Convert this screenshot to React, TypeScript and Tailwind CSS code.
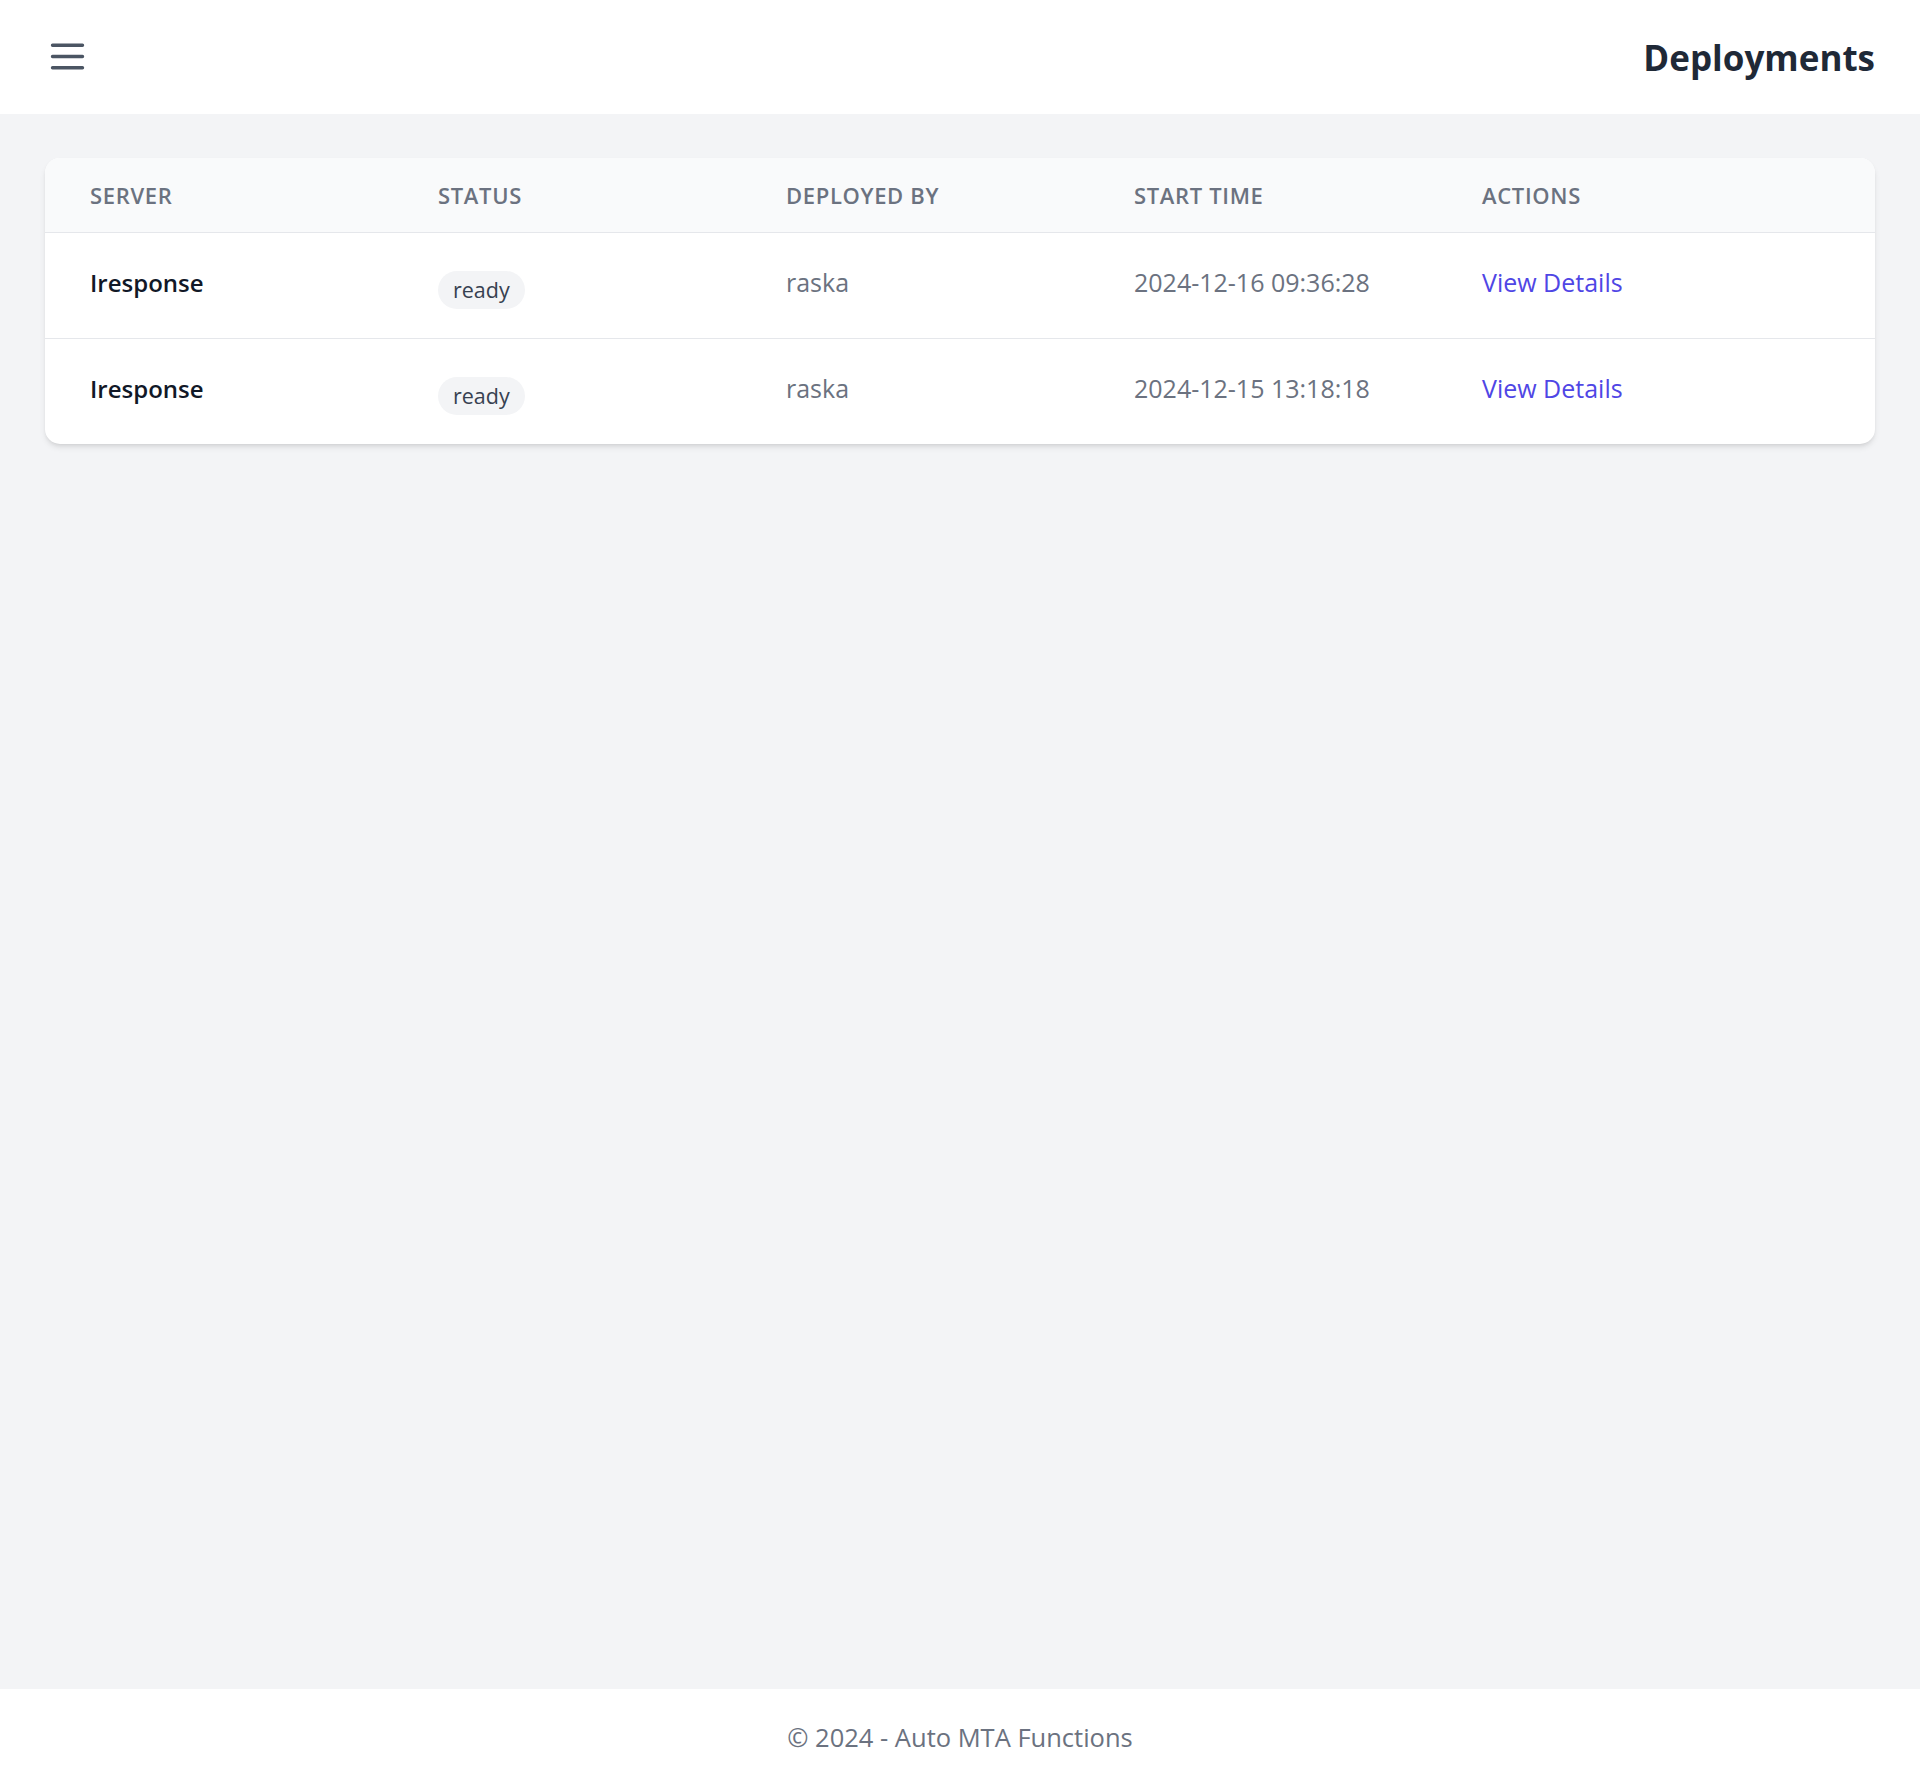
import React from "react";

type Deployment = {
    server: string;
    status: string;
    deployedBy: string;
    startTime: string;
};

const deployments: Deployment[] = [
    { server: "Iresponse", status: "ready", deployedBy: "raska", startTime: "2024-12-16 09:36:28" },
    { server: "Iresponse", status: "ready", deployedBy: "raska", startTime: "2024-12-15 13:18:18" },
];

const columns = ["Server", "Status", "Deployed By", "Start Time", "Actions"];

function MenuIcon() {
    return (
        <svg width="45" height="45" viewBox="0 0 24 24" fill="none" stroke="currentColor" strokeWidth="1.8" strokeLinecap="round">
            <path d="M4 6h16M4 12h16M4 18h16" />
        </svg>
    );
}

export default function App() {
    return (
        <div className="min-h-screen flex flex-col bg-[#f3f4f6] font-['Open_Sans',sans-serif]">
            <header className="h-[114px] bg-white flex items-center justify-between pl-[45px] pr-[45px]">
                <button className="text-[#4b5563] -mt-[1px]">
                    <MenuIcon />
                </button>
                <h1 className="text-[35px] font-bold text-[#1f2937] mt-[2px]">Deployments</h1>
            </header>

            <main className="flex-1 px-[45px] pt-[44px]">
                <div className="bg-white rounded-[15px] shadow-md overflow-hidden">
                    <div className="grid grid-cols-5 px-[45px] h-[75px] items-center bg-[#f9fafb] border-b border-[#e5e7eb]">
                        {columns.map((col) => (
                            <div key={col} className="text-[22px] font-semibold uppercase tracking-[0.03em] text-[#6b7280]">
                                {col}
                            </div>
                        ))}
                    </div>

                    {deployments.map((d, i) => (
                        <div
                            key={i}
                            className={
                                i < deployments.length - 1
                                    ? "grid grid-cols-5 px-[45px] h-[106px] items-center border-b border-[#e5e7eb]"
                                    : "grid grid-cols-5 px-[45px] h-[105px] items-center"
                            }
                        >
                            <div className="text-[24px] font-semibold text-[#111827] mb-[6px]">{d.server}</div>
                            <div>
                                <span className="inline-flex items-center h-[38px] px-[15px] mt-[9px] rounded-full bg-[#f3f4f6] text-[21.5px] font-medium text-[#374151]">
                                    {d.status}
                                </span>
                            </div>
                            <div className="text-[25px] text-[#6b7280] mb-[6px]">{d.deployedBy}</div>
                            <div className="text-[25px] text-[#6b7280] mb-[6px]">{d.startTime}</div>
                            <div className="mb-[6px]">
                                <a href="#" className="text-[25px] text-[#4f46e5]">View Details</a>
                            </div>
                        </div>
                    ))}
                </div>
            </main>

            <footer className="h-[96px] bg-white flex items-center justify-center">
                <p className="text-[25.5px] text-[#6b7280]">© 2024 - Auto MTA Functions</p>
            </footer>
        </div>
    );
}
